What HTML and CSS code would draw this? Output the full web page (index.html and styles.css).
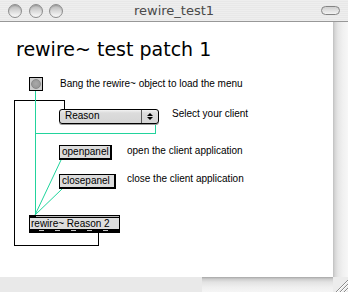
FILE: index.html
```html
<!DOCTYPE html>
<html>
<head>
<meta charset="utf-8">
<title>rewire_test1</title>
<link rel="stylesheet" href="styles.css">
</head>
<body>
<div class="window">
  <div class="titlebar">
    <div class="lights"><span class="light"></span><span class="light"></span><span class="light"></span></div>
    <div class="title">rewire_test1</div>
    <div class="pill"></div>
  </div>
  <div class="main">
    <div class="canvas">
      <svg class="cords" width="333" height="255" viewBox="0 0 333 255">
        <path class="cord-black" d="M98.5 211 V223.5 H14.5 V78.5 H64.5 V87"/>
        <rect class="cord-fill" x="35" y="69" width="1" height="124"/>
        <rect class="cord-fill" x="155" y="101" width="1" height="11"/>
        <rect class="cord-fill" x="35" y="111" width="121" height="1"/>
        <path class="cord-green" d="M61 138 L35 193"/>
        <path class="cord-green" d="M62 167 L35 193"/>
      </svg>
      <h1 class="patch-title">rewire~ test patch 1</h1>
      <div class="bang"><span class="bang-dot"></span></div>
      <div class="comment c-bang">Bang the rewire~ object to load the menu</div>
      <div class="menu">
        <span class="menu-label">Reason</span>
        <span class="menu-arrows"><span class="arrow-up"></span><span class="arrow-down"></span></span>
      </div>
      <div class="comment c-select">Select your client</div>
      <div class="msg m-open">openpanel</div>
      <div class="comment c-open">open the client application</div>
      <div class="msg m-close">closepanel</div>
      <div class="comment c-close">close the client application</div>
      <div class="obj">
        <div class="obj-top"></div>
        <div class="obj-text">rewire~ Reason 2</div>
        <div class="obj-bot"></div>
      </div>
    </div>
    <div class="vscroll"></div>
  </div>
  <div class="bottom">
    <div class="hleft"></div>
    <div class="htrack"></div>
    <div class="grip">
      <svg width="15" height="15" viewBox="0 0 15 15">
        <path d="M15 3 L3 15" stroke="#8c8c8c" stroke-width="1"/>
        <path d="M15 4 L4 15" stroke="#ffffff" stroke-width="1"/>
        <path d="M15 7 L7 15" stroke="#8c8c8c" stroke-width="1"/>
        <path d="M15 8 L8 15" stroke="#ffffff" stroke-width="1"/>
        <path d="M15 11 L11 15" stroke="#8c8c8c" stroke-width="1"/>
        <path d="M15 12 L12 15" stroke="#ffffff" stroke-width="1"/>
      </svg>
    </div>
  </div>
</div>
</body>
</html>
```

FILE: styles.css
```css
* { box-sizing: border-box; margin: 0; padding: 0; }
html, body { width: 348px; height: 292px; overflow: hidden; background: #fff; }
body { font-family: "Liberation Sans", Arial, sans-serif; color: #000; }

.window {
  display: grid;
  grid-template-rows: 22px 1fr 15px;
  width: 348px;
  height: 292px;
}

/* title bar */
.titlebar {
  display: grid;
  grid-template-columns: 1fr auto 1fr;
  align-items: center;
  border-bottom: 1px solid #989898;
  background: repeating-linear-gradient(to bottom, #eeeeee 0 1px, #e8e8e8 1px 2px);
}
.lights { display: flex; gap: 6.5px; padding-left: 8px; }
.light {
  width: 14px; height: 14px; border-radius: 50%;
  border: 1px solid #8d8d8d;
  background: linear-gradient(#b4b4b4 0%, #d6d6d6 45%, #eeeeee 80%, #f6f6f6 100%);
  box-shadow: inset 0 1px 1px rgba(0,0,0,0.15);
}
.title {
  font-family: "DejaVu Sans", sans-serif;
  font-size: 13px;
  color: #4a4a4a;
  line-height: 16px;
}
.pill {
  justify-self: end;
  margin-right: 8px;
  width: 19px; height: 9px;
  border: 1px solid #848484;
  border-radius: 5px;
  background: linear-gradient(#cfcfcf, #f3f3f3);
}

/* main area */
.main { display: grid; grid-template-columns: 1fr 15px; min-height: 0; }
.canvas { position: relative; overflow: hidden; background: #fff; }
.vscroll {
  background: linear-gradient(to right, #c0c0c0 0, #d6d6d6 2px, #e6e6e6 5px, #f1f1f1 10px, #f7f7f7 100%);
}

/* bottom bar */
.bottom { display: grid; grid-template-columns: 202px 1fr 15px; }
.hleft { background: #e9e9e9; }
.htrack {
  background: linear-gradient(#a6a6a6 0, #cccccc 2px, #e2e2e2 5px, #efefef 10px, #f5f5f5 100%);
}
.grip { background: #ececec; line-height: 0; }

/* patch cords */
.cords { position: absolute; left: 0; top: 0; }
.cords path { fill: none; stroke-width: 1; }
.cord-black { stroke: #000; shape-rendering: crispEdges; }
.cord-fill { fill: #22d39c; shape-rendering: crispEdges; }
.cord-green { stroke: #1fd49c; }

/* patcher objects */
.patch-title {
  position: absolute; left: 16px; top: 16px;
  font-family: "DejaVu Sans", sans-serif;
  font-size: 19px; line-height: 22px; font-weight: 400;
  white-space: nowrap;
}
.comment {
  position: absolute;
  font-size: 10px; line-height: 12px;
  white-space: nowrap;
}
.c-bang { left: 60px; top: 56px; }
.c-select { left: 172px; top: 86px; }
.c-open { left: 127px; top: 123px; }
.c-close { left: 127px; top: 151px; }

.bang {
  position: absolute; left: 29px; top: 55px;
  width: 14px; height: 14px;
  border: 1px solid #000;
  background: #cdcdcd;
  display: flex; align-items: center; justify-content: center;
}
.bang-dot {
  width: 10px; height: 10px; border-radius: 50%;
  background: radial-gradient(circle at 50% 45%, #a9a9a9, #999 70%, #8c8c8c);
  border: 1px solid #8a8a8a;
}

.menu {
  position: absolute; left: 59px; top: 87px;
  width: 100px; height: 15px;
  border: 1px solid #000; border-radius: 3px;
  display: flex;
  background: linear-gradient(#f2f2f2 0, #dcdcdc 3px, #d5d5d5 100%);
  box-shadow: 0 1px 0 #9a9a9a;
}
.menu-label { flex: 1; padding-left: 5px; font-size: 10px; line-height: 12px; white-space: nowrap; }
.menu-arrows {
  width: 17px; border-left: 1px solid #5a5a5a;
  display: flex; flex-direction: column; align-items: center; justify-content: center; gap: 1px;
}
.arrow-up { width: 0; height: 0; border-left: 3px solid transparent; border-right: 3px solid transparent; border-bottom: 3px solid #000; }
.arrow-down { width: 0; height: 0; border-left: 3px solid transparent; border-right: 3px solid transparent; border-top: 3px solid #000; }

.msg {
  position: absolute; height: 15px;
  border: 1px solid #000; border-right-width: 2px; border-bottom-width: 2px;
  background: #dcdcdc;
  font-size: 10px; line-height: 12px; padding-left: 2px;
  white-space: nowrap;
}
.m-open { left: 59px; top: 123px; width: 53px; }
.m-close { left: 59px; top: 152px; width: 57px; }

.obj {
  position: absolute; left: 29px; top: 193px;
  width: 91px; height: 18px;
  border: 1px solid #000;
  background: #dedede;
  display: flex; flex-direction: column;
}
.obj-top { height: 2px; position: relative; background: linear-gradient(#b8b8b8 0 1px, #000 1px 2px); }
.obj-top::before { content: ""; position: absolute; left: 0; top: 0; width: 6px; height: 1px; background: #000; }
.obj-text { height: 11px; font-size: 10px; line-height: 11px; padding-left: 1px; white-space: nowrap; }
.obj-bot { height: 3px; background: #000; position: relative; }
.obj-bot::after {
  content: ""; position: absolute; left: 9px; top: 1px; width: 69px; height: 1px;
  background: repeating-linear-gradient(to right, #c6c6c6 0 5px, transparent 5px 16px);
}
```
